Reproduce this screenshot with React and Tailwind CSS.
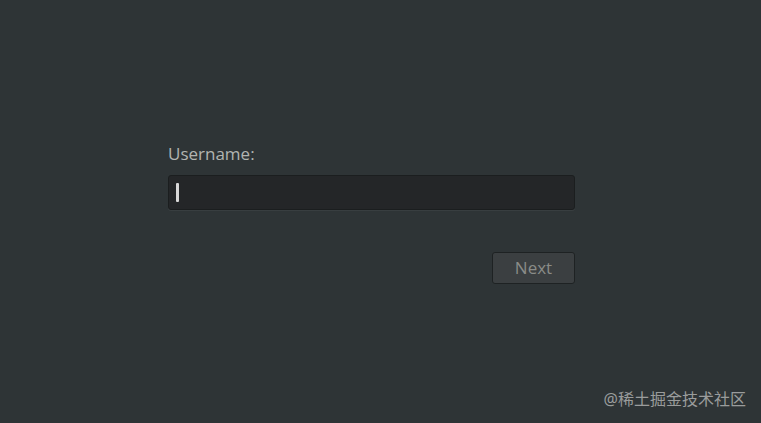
export default function App() {
  return (
    <div className="w-[761px] h-[423px] bg-[#2e3436] relative overflow-hidden" style={{ fontFamily: '"Open Sans", "Noto Sans", sans-serif' }}>
      <div className="flex flex-col pt-[142px] pl-[168px] w-[575px]">
        <div className="text-[17px] leading-[23px] text-[#b2b4b1]">Username:</div>
        <div className="mt-[10px] h-[35px] w-[407px] rounded-[3px] border border-[#1b1e1f] bg-[#242628] flex items-center pl-[7px] shadow-[0_1px_0_rgba(255,255,255,0.05)]">
          <div className="w-[3px] h-[19px] bg-[#d8d8d8] rounded-[1px]" />
        </div>
        <div className="flex justify-end mt-[42px]">
          <div className="w-[83px] h-[32px] rounded-[3px] border border-[#1e2223] bg-[#3b3f41] flex items-center justify-center text-[17px] text-[#8a8c88]">Next</div>
        </div>
      </div>
      <div className="absolute right-[15px] bottom-[14px] text-[16px] leading-[20px] text-[#9a9c9c]" style={{ fontFamily: '"Noto Sans", "Noto Sans CJK SC", sans-serif' }}>@稀土掘金技术社区</div>
    </div>
  );
}
